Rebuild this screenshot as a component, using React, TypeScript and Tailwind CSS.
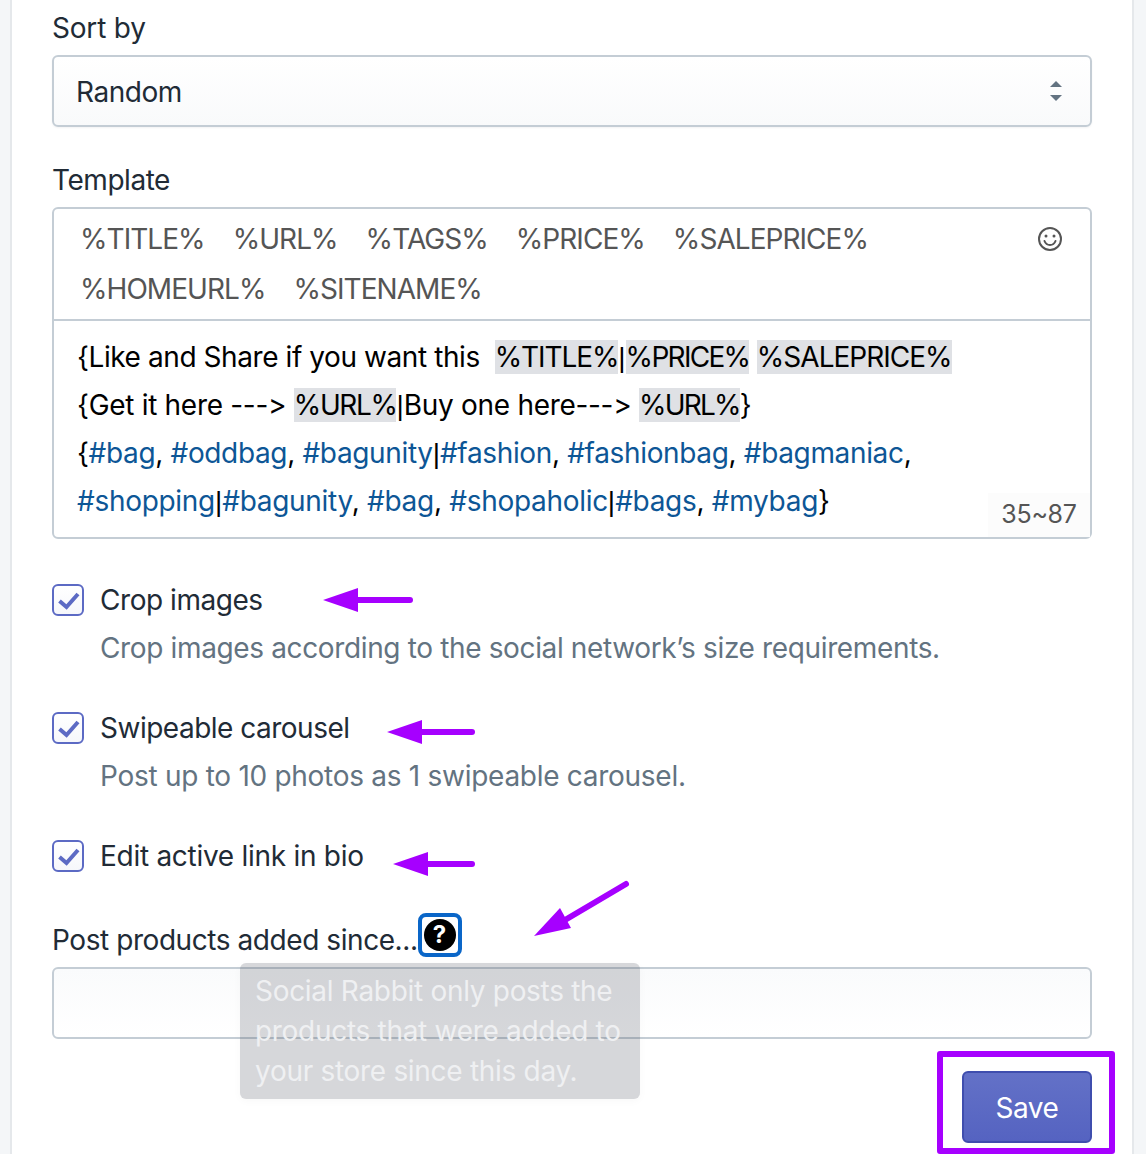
const TOKENS_ROW_1 = ['%TITLE%', '%URL%', '%TAGS%', '%PRICE%', '%SALEPRICE%']
const TOKENS_ROW_2 = ['%HOMEURL%', '%SITENAME%']

function Token({ children, className }: { children: string; className: string }) {
  return <span className={`bg-[#dfe1e5] ${className}`}>{children}</span>
}

function Tag({ children }: { children: string }) {
  return <span className="text-[#0d5696]">{children}</span>
}

// Inter's bar is too wide here, Arial's matches
function Pipe() {
  return <span className="font-['Liberation_Sans'] leading-none tracking-normal">|</span>
}

function CheckField({
  label,
  help,
  className,
  labelClass,
  helpClass,
}: {
  label: string
  help?: string
  className: string
  labelClass: string
  helpClass?: string
}) {
  return (
    <div className={className}>
      <div className="flex items-center gap-4">
        <span className="flex h-8 w-8 items-center justify-center rounded-md border-2 border-[#5c6ac4] bg-gradient-to-b from-white to-[#f6f7fb]">
          <svg viewBox="0 0 28 28" className="h-7 w-7" fill="none" stroke="#5c6ac4" strokeWidth="4">
            <path d="M5.5 15l7 6L24 8" />
          </svg>
        </span>
        <span className={`leading-10 text-[#212b36] ${labelClass}`}>{label}</span>
      </div>
      {help && <p className={`mt-2 pl-12 leading-10 text-[#637381] ${helpClass}`}>{help}</p>}
    </div>
  )
}

function Annotations() {
  return (
    <svg className="pointer-events-none absolute left-0 top-0 h-[1154px] w-[1146px]" viewBox="0 0 1146 1154" fill="#a600ff" stroke="none">
      <g stroke="#a600ff" strokeWidth="6" strokeLinecap="round">
        <path d="M355 600H410" />
        <path d="M420 732H472" />
        <path d="M425 864H472" />
        <path d="M565 920L626 884" />
      </g>
      <path d="M323 600L358 588V612Z" />
      <path d="M387 732L422 720V744Z" />
      <path d="M393 864L428 852V876Z" />
      <path d="M534 936L560 908L571 928Z" />
    </svg>
  )
}

export default function App() {
  return (
    <div className="relative h-[1154px] overflow-hidden bg-[#f4f6f8] font-['Inter','Liberation_Sans',sans-serif] text-[28px] text-[#212b36]">
      <div className="ml-[10px] h-full w-[1124px] border-x-2 border-[#e5e8eb] bg-white px-10 pt-2">
        <label className="block leading-10 tracking-[-0.2px]">Sort by</label>
        <div className="mt-[7px] flex h-[72px] items-center justify-between rounded-md border-2 border-[#c4cdd5] bg-gradient-to-b from-white to-[#f9fafb] pl-[22px] pr-[28px] shadow-[0_1px_2px_rgba(22,29,37,0.05)]">
          <span className="mt-[2px] tracking-[-0.45px]">Random</span>
          <svg viewBox="0 0 12 20" className="h-5 w-3" fill="#637381">
            <path d="M6 0L12 6H0Z" />
            <path d="M0 14H12L6 20Z" />
          </svg>
        </div>

        <label className="mt-[33px] block leading-10 tracking-[-0.45px]">Template</label>
        <div className="relative mt-[7px] h-[332px] rounded-md border-2 border-[#c4cdd5]">
          <div className="relative h-[112px] border-b-2 border-[#c4cdd5] pl-[26px] pt-[5px] leading-[50px] tracking-[-0.95px] text-[#555]">
            <div className="flex gap-[28px]">
              {TOKENS_ROW_1.map((token) => (
                <span key={token}>{token}</span>
              ))}
            </div>
            <div className="flex gap-[28px]">
              {TOKENS_ROW_2.map((token) => (
                <span key={token}>{token}</span>
              ))}
            </div>
            <svg viewBox="0 0 24 24" className="absolute right-[28px] top-[18px] h-6 w-6" fill="none" stroke="#555" strokeWidth="2" strokeLinecap="round">
              <circle cx="12" cy="12" r="11" />
              <path d="M6.5 14c1 2.6 3 4 5.500 4s4.500-1.400 5.500-4" />
              <circle cx="8" cy="9" r="1.500" fill="#555" stroke="none" />
              <circle cx="16" cy="9" r="1.500" fill="#555" stroke="none" />
            </svg>
          </div>
          <div className="whitespace-pre pl-[23px] pt-3 leading-[48px] tracking-[-0.3px] text-black">
            <div className="tracking-[-0.42px]">
              {'{Like and Share if you want this  '}
              <Token className="tracking-[-1.1px]">%TITLE%</Token>
              <Pipe />
              <Token className="tracking-[-1.7px]">%PRICE%</Token> <Token className="tracking-[-1px]">%SALEPRICE%</Token>
            </div>
            <div>
              {'{Get it here ---> '}
              <Token className="tracking-[-1.4px]">%URL%</Token>
              <Pipe />
              Buy one here---&gt; <Token className="tracking-[-1.8px]">%URL%</Token>
              {'}'}
            </div>
            <div className="tracking-[-0.35px]">
              {'{'}
              <Tag>#bag</Tag>, <Tag>#oddbag</Tag>, <Tag>#bagunity</Tag>
              <Pipe />
              <Tag>#fashion</Tag>, <Tag>#fashionbag</Tag>, <Tag>#bagmaniac</Tag>,
            </div>
            <div>
              <Tag>#shopping</Tag>
              <Pipe />
              <Tag>#bagunity</Tag>, <Tag>#bag</Tag>, <Tag>#shopaholic</Tag>
              <Pipe />
              <Tag>#bags</Tag>, <Tag>#mybag</Tag>
              {'}'}
            </div>
          </div>
          <span className="absolute bottom-0 right-0 flex h-[44px] w-[102px] items-center justify-center bg-[#fcfcfc] text-[25px] tracking-[-0.3px] text-[#555]">
            35~87
          </span>
        </div>

        <CheckField
          className="mt-[41px]"
          labelClass="tracking-[-0.45px]"
          helpClass="tracking-[-0.36px]"
          label="Crop images"
          help="Crop images according to the social network’s size requirements."
        />
        <CheckField
          className="mt-[40px]"
          labelClass="tracking-[-0.5px]"
          helpClass="tracking-[-0.28px]"
          label="Swipeable carousel"
          help="Post up to 10 photos as 1 swipeable carousel."
        />
        <CheckField className="mt-[40px]" labelClass="tracking-[-0.28px]" label="Edit active link in bio" />

        <div className="relative mt-[37px]">
          <div className="flex h-[44px] items-start">
            <label className="mt-[7px] leading-10 tracking-[-0.43px]">Post products added since...</label>
            <span className="flex h-[44px] w-[44px] items-center justify-center rounded-lg border-4 border-[#0a66c8]">
              <span className="flex h-8 w-8 items-center justify-center rounded-full bg-black text-[24px] font-bold leading-none text-white">
                ?
              </span>
            </span>
          </div>
          <div className="mt-[10px] h-[72px] rounded-md border-2 border-[#c4cdd5] bg-gradient-to-b from-[#fafbfc] to-white" />
          <div className="absolute left-[188px] top-[50px] h-[136px] w-[400px] rounded-md bg-[rgba(70,75,85,0.22)] px-[15px] pt-[8px] leading-10 tracking-[-0.3px] text-[#eff0f2] shadow-[0_2px_8px_rgba(0,0,0,0.03)]">
            Social Rabbit only posts the products that were added to your store since this day.
          </div>
        </div>

        <div className="mt-[32px] flex justify-end">
          <button className="h-[72px] w-[130px] rounded-md border-2 border-[#3f4eae] bg-gradient-to-b from-[#6371c7] to-[#5563c1] pt-[1px] tracking-[-0.5px] text-white">
            Save
          </button>
        </div>
      </div>

      <Annotations />
      <div className="absolute left-[937px] top-[1051px] h-[103px] w-[178px] rounded-[3px] border-[6px] border-[#a600ff]" />
    </div>
  )
}
